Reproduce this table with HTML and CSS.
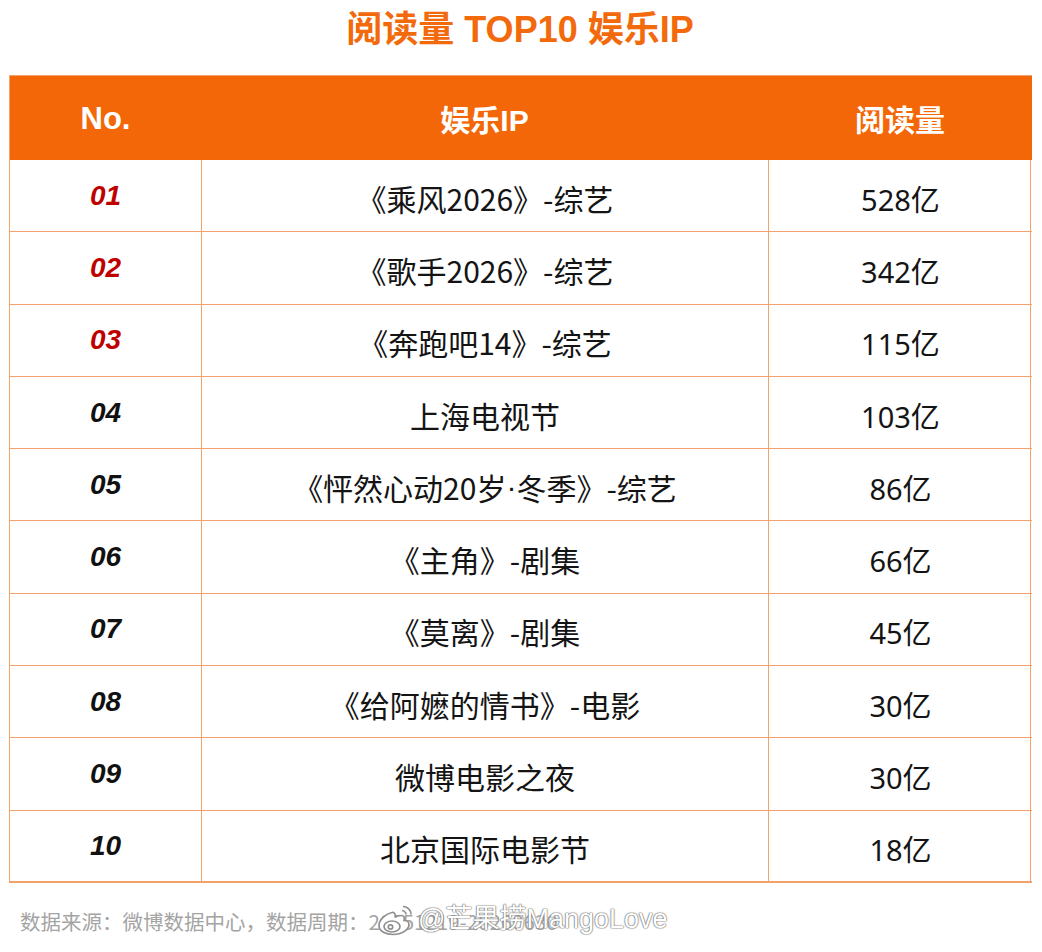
FILE: index.html
```html
<!DOCTYPE html>
<html lang="zh-CN">
<head>
<meta charset="utf-8">
<link rel="stylesheet" href="styles.css">
</head>
<body>
<div class="page">
  <h1 class="title">阅读量 TOP10 娱乐IP</h1>
  <div class="table">
    <div class="hd c1">No.</div>
    <div class="hd c2">娱乐IP</div>
    <div class="hd c3">阅读量</div>

    <div class="cell num red">01</div><div class="cell name">《乘风2026》-综艺</div><div class="cell val">528亿</div>
    <div class="cell num red">02</div><div class="cell name">《歌手2026》-综艺</div><div class="cell val">342亿</div>
    <div class="cell num red">03</div><div class="cell name">《奔跑吧14》-综艺</div><div class="cell val">115亿</div>
    <div class="cell num">04</div><div class="cell name">上海电视节</div><div class="cell val">103亿</div>
    <div class="cell num">05</div><div class="cell name">《怦然心动20岁<span class="dot">·</span>冬季》-综艺</div><div class="cell val">86亿</div>
    <div class="cell num">06</div><div class="cell name">《主角》-剧集</div><div class="cell val">66亿</div>
    <div class="cell num">07</div><div class="cell name">《莫离》-剧集</div><div class="cell val">45亿</div>
    <div class="cell num">08</div><div class="cell name">《给阿嬷的情书》-电影</div><div class="cell val">30亿</div>
    <div class="cell num">09</div><div class="cell name">微博电影之夜</div><div class="cell val">30亿</div>
    <div class="cell num last">10</div><div class="cell name last">北京国际电影节</div><div class="cell val last">18亿</div>
  </div>
  <div class="footer">
    <span class="src">数据来源：微博数据中心，数据周期：20251219-20260630</span>
    <span class="wm">
      <svg class="wb" viewBox="0 0 40 34" width="40" height="35">
        <g fill="#fff" stroke="#8f8f8f" stroke-width="1.7">
          <path d="M16 10c-6 1-13 7-13 13 0 6 7 9 14 9 9 0 16-5 16-10 0-3-3-4-5-4 1-3 0-5-3-5-2 0-5 1-6 2 1-3-1-6-3-5z"/>
          <ellipse cx="16" cy="24" rx="8" ry="5.5"/>
          <circle cx="14.5" cy="24.5" r="2.2"/>
          <path d="M27 4c4 0 8 3 8 8" fill="none"/>
          <path d="M26 8c2 0 4 2 4 4" fill="none"/>
        </g>
      </svg>
      <span class="wmt">@芒果捞MangoLove</span>
    </span>
  </div>
</div>
</body>
</html>
```
FILE: styles.css
```css
html, body {
  margin: 0;
  padding: 0;
  background: #ffffff;
}
.page {
  width: 1042px;
  height: 952px;
  padding: 0 0 0 9px;
  box-sizing: border-box;
  font-family: "Noto Sans CJK SC", "Noto Sans", sans-serif;
  color: #111;
}
.title {
  margin: 0;
  width: 1022px;
  height: 75px;
  box-sizing: border-box;
  padding-top: 8px;
  text-align: center;
  font-family: "Liberation Sans", "Noto Sans CJK SC", sans-serif;
  font-weight: 700;
  font-size: 36px;
  line-height: 44px;
  color: #F26A0C;
}
.table {
  width: 1022px;
  display: grid;
  grid-template-columns: 191px 567px 264px;
  grid-template-rows: 85px repeat(10, 72.3px);
  border-left: 1.5px solid #F4A26C;
  border-right: 1.5px solid #F4A26C;
  box-sizing: border-box;
}
.hd {
  background: #F46709;
  color: #fff;
  font-weight: 700;
  font-size: 30px;
  display: flex;
  align-items: center;
  justify-content: center;
  border-top: 1.5px solid #F4A26C;
}
.hd.c1 {
  font-family: "Liberation Sans", sans-serif;
  font-size: 31px;
  padding-top: 2px;
}
.hd.c2 {
  font-family: "Liberation Sans", "Noto Sans CJK SC", sans-serif;
}
.cell {
  display: flex;
  align-items: center;
  justify-content: center;
  border-bottom: 1.5px solid #F4A26C;
  font-size: 30px;
  color: #141414;
}
.cell.name, .cell.val {
  border-left: 1.5px solid #F4A26C;
}
.cell.name {
  padding-top: 4px;
}
.dot {
  font-family: "Liberation Sans", sans-serif;
}
.cell.val {
  padding-top: 4px;
  font-size: 29px;
  font-family: "Noto Sans", "Noto Sans CJK SC", sans-serif;
}
.cell.last {
  border-bottom-width: 2px;
}
.num {
  font-family: "Liberation Sans", sans-serif;
  font-weight: 700;
  font-style: italic;
  font-size: 28px;
  color: #111;
}
.num.red {
  color: #C00000;
}
.footer {
  position: relative;
  height: 70px;
  padding: 24px 0 0 11px;
  box-sizing: border-box;
}
.src {
  font-size: 20.5px;
  color: #a4a4a4;
  line-height: 28px;
}
.wm {
  position: absolute;
  left: 367px;
  top: 19px;
  display: flex;
  align-items: center;
  gap: 2px;
}
.wmt {
  font-family: "Liberation Sans", "Noto Sans CJK SC", sans-serif;
  font-size: 27px;
  color: #ffffff;
  text-shadow: 0 0 1px #666, 0 0 1px #666, 0 0 2px #888;
  line-height: 32px;
}
```
